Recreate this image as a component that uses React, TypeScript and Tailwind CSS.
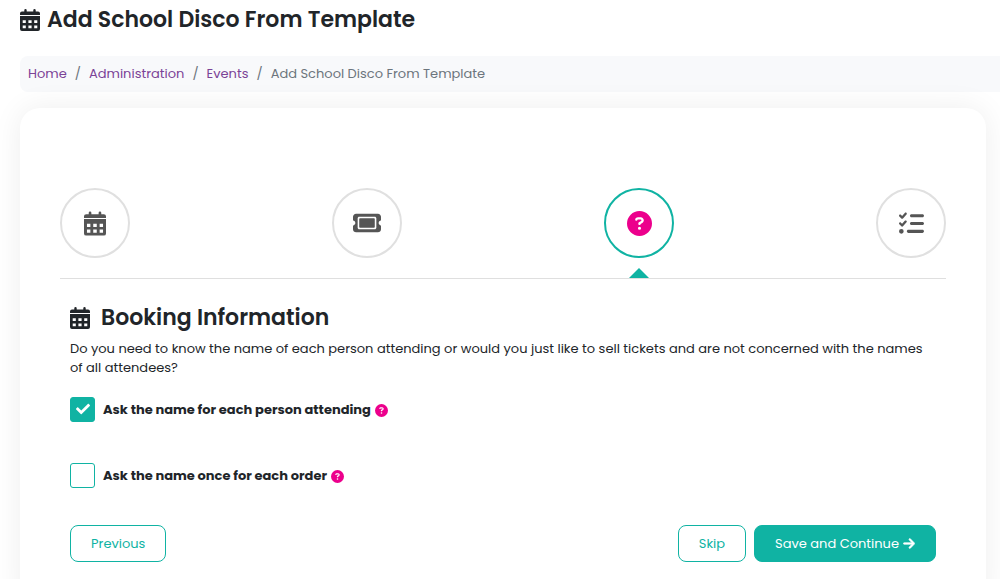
import type { ComponentType, ReactNode } from 'react';
import { FaCheck } from 'react-icons/fa';
import { FaArrowRight, FaCircleQuestion, FaListCheck, FaTicket } from 'react-icons/fa6';
import clsx from 'clsx';

const links = ['Home', 'Administration', 'Events'];

export default function App() {
  return (
    <div className="min-h-screen overflow-x-clip bg-white pl-5 font-[Poppins,Inter,sans-serif] text-[13px] text-[#212529]">
      <h1 className="flex items-center gap-[7px] pt-1 text-[22px] leading-8 font-semibold">
        <CalendarIcon className="h-[22px] w-5" />
        Add School Disco From Template
      </h1>

      <nav aria-label="Breadcrumb" className="mt-5 rounded-l-lg bg-[#f8f9fb] px-2 py-2">
        <ol className="flex leading-5 text-[#6c757d]">
          {links.map((link) => (
            <li key={link}>
              <a href="#" className="text-[#7b4397]">{link}</a>
              <span className="px-2">/</span>
            </li>
          ))}
          <li aria-current="page">Add School Disco From Template</li>
        </ol>
      </nav>

      <main className="mt-4 mr-[14px] rounded-[20px] bg-white px-10 pt-20 shadow-[0_0_30px_rgba(0,0,0,0.07)]">
        <ol className="flex justify-between border-b border-[#dfdfdf] pb-5">
          <Step icon={CalendarIcon} label="Event details" className="h-[25px] w-[22px]" />
          <Step icon={FaTicket} label="Tickets" className="h-7 w-7" />
          <Step icon={FaCircleQuestion} label="Booking information" className="h-[25px] w-[25px]" active />
          <Step icon={FaListCheck} label="Review" className="h-[25px] w-[25px]" />
        </ol>

        <form className="px-[10px] pt-[23px] pb-12" onSubmit={(e) => e.preventDefault()}>
          <h2 className="flex items-center gap-[11px] text-[22px] leading-8 font-semibold">
            <CalendarIcon className="h-[22px] w-5" />
            Booking Information
          </h2>
          <p className="mt-[5px] leading-[19px]">
            Do you need to know the name of each person attending or would you just like to sell tickets and are not
            concerned with the names of all attendees?
          </p>

          <div className="mt-5 space-y-10">
            <Option id="each-person" defaultChecked>Ask the name for each person attending</Option>
            <Option id="each-order">Ask the name once for each order</Option>
          </div>

          <div className="mt-9 flex gap-2">
            <Button className="mr-auto">Previous</Button>
            <Button>Skip</Button>
            <Button primary>
              Save and Continue <FaArrowRight className="h-[13px] w-3 stroke-current stroke-[24]" />
            </Button>
          </div>
        </form>
      </main>
    </div>
  );
}

function Step({ icon: Icon, label, className, active }: { icon: ComponentType<{ className?: string }>, label: string, className: string, active?: boolean }) {
  return (
    <li
      aria-label={label}
      aria-current={active ? 'step' : undefined}
      className={clsx(
        'relative flex h-[70px] w-[70px] items-center justify-center rounded-full border-2',
        active ? 'border-[#10b3a3] text-[#ec008c]' : 'border-[#e0e0e0] text-[#555]'
      )}
    >
      <Icon className={className} />
      {active && (
        <span className="absolute top-full mt-3 h-[10px] w-5 bg-[#10b3a3] [clip-path:polygon(50%_0,100%_100%,0_100%)]" />
      )}
    </li>
  );
}

function Option({ id, children, defaultChecked }: { id: string, children: ReactNode, defaultChecked?: boolean }) {
  return (
    <div className="flex h-[26px] items-center">
      <span className="relative flex h-full items-start">
        <input
          id={id}
          type="checkbox"
          defaultChecked={defaultChecked}
          className="peer h-[25px] w-[25px] appearance-none rounded-[3px] border border-[#10b3a3] bg-white checked:bg-[#10b3a3]"
        />
        <FaCheck className="pointer-events-none absolute top-[5px] left-[6px] hidden h-[14px] w-[14px] text-white peer-checked:block" />
      </span>
      <label htmlFor={id} className="pl-2 font-bold">{children}</label>
      <FaCircleQuestion className="ml-1 h-[13px] w-[13px] text-[#ec008c]" />
    </div>
  );
}

function Button({ children, primary, className }: { children: ReactNode, primary?: boolean, className?: string }) {
  return (
    <button
      type={primary ? 'submit' : 'button'}
      className={clsx(
        'flex h-[37px] items-center gap-1 rounded-lg border border-[#10b3a3] px-5',
        primary ? 'bg-[#10b3a3] text-white' : 'bg-white text-[#10b3a3]',
        className
      )}
    >
      {children}
    </button>
  );
}

function CalendarIcon({ className }: { className?: string }) {
  return (
    <svg viewBox="0 0 20 22" className={className} fill="currentColor" fillRule="evenodd" aria-hidden="true">
      <path d="M5.500 0a1.200 1.200 0 0 1 1.200 1.200v1.300h6.600V1.200a1.200 1.200 0 0 1 2.400 0v1.300H18a2 2 0 0 1 2 2V6H0V4.500a2 2 0 0 1 2-2h2.300V1.200A1.200 1.200 0 0 1 5.500 0z" />
      <path d="M0 7h20v13a2 2 0 0 1-2 2H2a2 2 0 0 1-2-2zM2.700 11.200v2.900h3.100v-2.900zM8.400 11.200v2.900h3.200v-2.900zM14.200 11.200v2.900h3.100v-2.900zM2.700 16.400v2.900h3.100v-2.900zM8.400 16.400v2.900h3.200v-2.900zM14.200 16.400v2.900h3.100v-2.900z" />
    </svg>
  );
}
